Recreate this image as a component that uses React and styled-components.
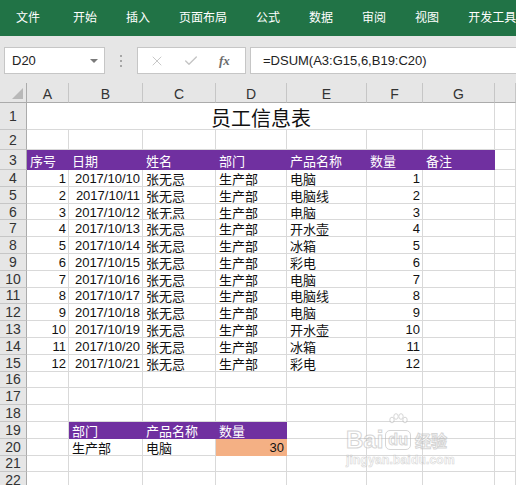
import React from "react";
import styled, { createGlobalStyle } from "styled-components";
import { X, Check } from "lucide-react";

const GlobalStyle = createGlobalStyle`
  html, body {
    margin: 0;
    padding: 0;
    background: #ffffff;
    overflow: hidden;
  }
  body {
    font-family: "Liberation Sans", "Noto Sans CJK SC", sans-serif;
  }
  * {
    box-sizing: border-box;
  }
`;

const Page = styled.div`
  width: 516px;
  height: 485px;
  position: relative;
  overflow: hidden;
  background: #fff;
`;

const Ribbon = styled.nav`
  height: 36px;
  background: #217346;
  display: flex;
  align-items: center;
  gap: 29px;
  padding: 0 0 3px 16px;
  white-space: nowrap;
  overflow: hidden;
`;

const Tab = styled.span`
  color: #ffffff;
  font-size: 12px;
  font-family: "Noto Sans CJK SC", sans-serif;
  margin-right: ${(p) => (p.$wide ? "4px" : "0")};
`;

const FormulaBar = styled.div`
  height: 47px;
  background: #e6e6e6;
  display: flex;
  align-items: flex-start;
  padding: 11px 0 0 4px;
`;

const NameBox = styled.div`
  width: 101px;
  height: 27px;
  background: #fff;
  border: 1px solid #c6c6c6;
  display: flex;
  align-items: center;
  justify-content: space-between;
  padding: 0 6px 0 7px;
  font-size: 13px;
  color: #222;
`;

const DropArrow = styled.span`
  width: 0;
  height: 0;
  border-left: 4px solid transparent;
  border-right: 4px solid transparent;
  border-top: 4px solid #7a7a7a;
`;

const Dots = styled.div`
  width: 32px;
  height: 27px;
  display: flex;
  flex-direction: column;
  align-items: center;
  justify-content: center;
  gap: 3px;

  span {
    width: 2px;
    height: 2px;
    background: #a6a6a6;
  }
`;

const IconBox = styled.div`
  width: 109px;
  height: 27px;
  background: #fff;
  border: 1px solid #c6c6c6;
  display: flex;
  align-items: center;
  padding-left: 11px;
  gap: 18px;
  color: #c4c4c4;
`;

const Fx = styled.span`
  font-family: "Liberation Serif", serif;
  font-style: italic;
  font-weight: bold;
  font-size: 13px;
  color: #6b6b6b;
  margin-left: 2px;
`;

const FormulaInput = styled.div`
  flex: 1;
  height: 27px;
  margin-left: 4px;
  background: #fff;
  border: 1px solid #c6c6c6;
  border-right: none;
  display: flex;
  align-items: center;
  padding-left: 12px;
  font-size: 13px;
  color: #222;
`;

const Sheet = styled.div`
  display: grid;
  grid-template-columns: 27px 42px 74px 73px 71px 80px 56px 72px 1fr;
  grid-template-rows: 20px 27px 20px 20px repeat(19, 16.8px);
`;

const ColHead = styled.div`
  background: #e6e6e6;
  border-right: 1px solid #c6c6c6;
  border-bottom: 1px solid #ababab;
  display: flex;
  align-items: center;
  justify-content: center;
  font-size: 14px;
  color: #333;
  padding-top: 2px;
`;

const Corner = styled(ColHead)`
  justify-content: flex-end;
  align-items: flex-end;
  padding: 0 3px 3px 0;
  border-right-color: #ababab;
`;

const RowHead = styled.div`
  background: #e6e6e6;
  border-right: 1px solid #ababab;
  border-bottom: 1px solid #c6c6c6;
  display: flex;
  align-items: center;
  justify-content: center;
  font-size: 14px;
  color: #333;
`;

const Cell = styled.div`
  background: ${(p) => p.$fill || "#fff"};
  border-right: 1px solid ${(p) => p.$fill || "#d9d9d9"};
  border-bottom: 1px solid ${(p) => (p.$fill ? p.$fill : "#d9d9d9")};
  color: ${(p) => (p.$light ? "#ffffff" : "#111")};
  font-size: 13px;
  display: flex;
  align-items: center;
  justify-content: ${(p) => (p.$right ? "flex-end" : "flex-start")};
  padding: 1px 2px 0 3px;
  white-space: nowrap;
  overflow: hidden;
  grid-column: ${(p) => p.$span || "auto"};
`;

const Title = styled(Cell)`
  justify-content: center;
  font-size: 20px;
  padding-top: 2px;
`;

const Watermark = styled.div`
  position: absolute;
  left: 346px;
  top: 428px;
  display: flex;
  flex-direction: column;
  align-items: flex-start;
  opacity: 0.55;
  pointer-events: none;
`;

const MarkTop = styled.div`
  display: flex;
  align-items: flex-end;
  gap: 2px;
  font-family: "Liberation Sans", "Noto Sans CJK SC", sans-serif;
  font-weight: bold;
  color: #ffffff;
  -webkit-text-stroke: 1px #b5b5b5;
`;

const Bai = styled.span`
  font-size: 24px;
  line-height: 24px;
`;

const Du = styled.span`
  position: relative;
  font-size: 16px;
  line-height: 18px;
  padding: 0 2px;
  border: 1px solid #b5b5b5;
  border-radius: 5px;
  margin-bottom: 2px;

  svg {
    position: absolute;
    left: 2px;
    top: -18px;
  }
`;

const Jing = styled.span`
  font-size: 16px;
  line-height: 20px;
  margin-left: 2px;
`;

const MarkUrl = styled.span`
  font-size: 12px;
  font-weight: bold;
  color: #ffffff;
  -webkit-text-stroke: 0.6px #b5b5b5;
  margin-top: 1px;
  letter-spacing: 0.2px;
`;

const PURPLE = "#7030a0";
const ORANGE = "#f4b084";

const cols = ["A", "B", "C", "D", "E", "F", "G", ""];
const products = ["电脑", "电脑线", "电脑", "开水壶", "冰箱", "彩电"];

const data = Array.from({ length: 12 }, (_, i) => ({
  no: i + 1,
  date: `2017/10/${10 + i}`,
  name: "张无忌",
  dept: "生产部",
  product: products[i % 6],
  qty: i + 1,
}));

const tabs = ["文件", "开始", "插入", "页面布局", "公式", "数据", "审阅", "视图", "开发工具"];

const emptyCells = (n, key) =>
  Array.from({ length: n }, (_, i) => <Cell key={`${key}-${i}`} />);

const App = () => {
  const rows = [];

  // row 1: title
  rows.push(
    <RowHead key="r1">1</RowHead>,
    <Title key="t" $span="2 / 9">员工信息表</Title>,
    <Cell key="r1x" />
  );

  // row 2
  rows.push(<RowHead key="r2">2</RowHead>, ...emptyCells(8, "r2"));

  // row 3: header
  rows.push(<RowHead key="r3">3</RowHead>);
  ["序号", "日期", "姓名", "部门", "产品名称", "数量", "备注"].forEach((h) =>
    rows.push(
      <Cell key={`h-${h}`} $fill={PURPLE} $light>
        {h}
      </Cell>
    )
  );
  rows.push(<Cell key="r3x" />);

  data.forEach((d, i) => {
    const r = i + 4;
    rows.push(
      <RowHead key={`rh${r}`}>{r}</RowHead>,
      <Cell key={`a${r}`} $right>{d.no}</Cell>,
      <Cell key={`b${r}`} $right>{d.date}</Cell>,
      <Cell key={`c${r}`}>{d.name}</Cell>,
      <Cell key={`d${r}`}>{d.dept}</Cell>,
      <Cell key={`e${r}`}>{d.product}</Cell>,
      <Cell key={`f${r}`} $right>{d.qty}</Cell>,
      ...emptyCells(2, `g${r}`)
    );
  });

  [16, 17, 18].forEach((r) =>
    rows.push(<RowHead key={`rh${r}`}>{r}</RowHead>, ...emptyCells(8, `e${r}`))
  );

  rows.push(
    <RowHead key="rh19">19</RowHead>,
    <Cell key="a19" />,
    <Cell key="b19" $fill={PURPLE} $light>部门</Cell>,
    <Cell key="c19" $fill={PURPLE} $light>产品名称</Cell>,
    <Cell key="d19" $fill={PURPLE} $light>数量</Cell>,
    ...emptyCells(4, "x19")
  );

  rows.push(
    <RowHead key="rh20">20</RowHead>,
    <Cell key="a20" />,
    <Cell key="b20">生产部</Cell>,
    <Cell key="c20">电脑</Cell>,
    <Cell key="d20" $fill={ORANGE} $right>30</Cell>,
    ...emptyCells(4, "x20")
  );

  [21, 22].forEach((r) =>
    rows.push(<RowHead key={`rh${r}`}>{r}</RowHead>, ...emptyCells(8, `e${r}`))
  );

  return (
    <Page>
      <GlobalStyle />
      <Ribbon>
        {tabs.map((t, i) => (
          <Tab key={t} $wide={i === 0}>
            {t}
          </Tab>
        ))}
      </Ribbon>

      <FormulaBar>
        <NameBox>
          <span>D20</span>
          <DropArrow />
        </NameBox>
        <Dots>
          <span />
          <span />
          <span />
        </Dots>
        <IconBox>
          <X size={16} strokeWidth={1.4} />
          <Check size={16} strokeWidth={2} />
          <Fx>fx</Fx>
        </IconBox>
        <FormulaInput>=DSUM(A3:G15,6,B19:C20)</FormulaInput>
      </FormulaBar>

      <Sheet>
        <Corner>
          <svg width="11" height="11" viewBox="0 0 11 11">
            <polygon points="11,0 11,11 0,11" fill="#b8b8b8" />
          </svg>
        </Corner>
        {cols.map((c, i) => (
          <ColHead key={`col${i}`}>{c}</ColHead>
        ))}
        {rows}
      </Sheet>

      <Watermark>
        <MarkTop>
          <Bai>Bai</Bai>
          <Du>
            <svg width="20" height="17" viewBox="0 0 20 17">
              <g fill="#fff" stroke="#b5b5b5" strokeWidth="1">
                <ellipse cx="4" cy="7" rx="2.2" ry="2.8" />
                <ellipse cx="8" cy="3.5" rx="2.2" ry="2.8" />
                <ellipse cx="13" cy="3.5" rx="2.2" ry="2.8" />
                <ellipse cx="17" cy="7" rx="2.2" ry="2.8" />
              </g>
            </svg>
            du
          </Du>
          <Jing>经验</Jing>
        </MarkTop>
        <MarkUrl>jingyan.baidu.com</MarkUrl>
      </Watermark>
    </Page>
  );
};

export default App;
